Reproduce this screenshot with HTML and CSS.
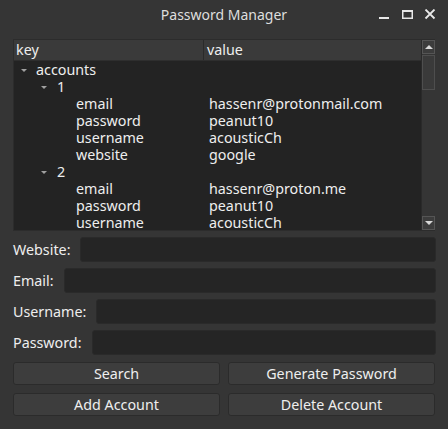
FILE: index.html
```html
<!DOCTYPE html>
<html>
<head>
<meta charset="utf-8">
<link rel="stylesheet" href="styles.css">
</head>
<body>
<div class="window">
  <div class="titlebar">
    <div class="title">Password Manager</div>
    <div class="controls">
      <svg class="ctl" width="12" height="12" viewBox="0 0 12 12"><rect x="1" y="8" width="10" height="2" fill="#e8e8e8"/></svg>
      <svg class="ctl" width="12" height="12" viewBox="0 0 12 12"><rect x="1.75" y="1.75" width="9.5" height="7.5" fill="none" stroke="#e8e8e8" stroke-width="1.5"/><rect x="1" y="1" width="11" height="2" fill="#e8e8e8"/></svg>
      <svg class="ctl" width="12" height="12" viewBox="0 0 12 12"><path d="M1.5 0.5 L10.5 9.5 M10.5 0.5 L1.5 9.5" stroke="#e8e8e8" stroke-width="1.8" fill="none"/></svg>
    </div>
  </div>
  <div class="content">
    <div class="tree">
      <div class="tree-main">
        <div class="header">
          <div class="hcell key">key</div>
          <div class="hcell val">value</div>
        </div>
        <div class="rows">
          <div class="row"><div class="kcell l0"><span class="arrow"></span><span class="t">accounts</span></div><div class="vcell"></div></div>
          <div class="row"><div class="kcell l1"><span class="arrow"></span><span class="t">1</span></div><div class="vcell"></div></div>
          <div class="row"><div class="kcell l2"><span class="t">email</span></div><div class="vcell"><span class="t">hassenr@protonmail.com</span></div></div>
          <div class="row"><div class="kcell l2"><span class="t">password</span></div><div class="vcell"><span class="t">peanut10</span></div></div>
          <div class="row"><div class="kcell l2"><span class="t">username</span></div><div class="vcell"><span class="t">acousticCh</span></div></div>
          <div class="row"><div class="kcell l2"><span class="t">website</span></div><div class="vcell"><span class="t">google</span></div></div>
          <div class="row"><div class="kcell l1"><span class="arrow"></span><span class="t">2</span></div><div class="vcell"></div></div>
          <div class="row"><div class="kcell l2"><span class="t">email</span></div><div class="vcell"><span class="t">hassenr@proton.me</span></div></div>
          <div class="row"><div class="kcell l2"><span class="t">password</span></div><div class="vcell"><span class="t">peanut10</span></div></div>
          <div class="row"><div class="kcell l2"><span class="t">username</span></div><div class="vcell"><span class="t">acousticCh</span></div></div>
        </div>
      </div>
      <div class="scrollbar">
        <div class="sbtn"><span class="up"></span></div>
        <div class="track"><div class="thumb"></div></div>
        <div class="sbtn"><span class="down"></span></div>
      </div>
    </div>
    <div class="form">
      <div class="frow"><label>Website:</label><div class="input"></div></div>
      <div class="frow"><label>Email:</label><div class="input"></div></div>
      <div class="frow"><label>Username:</label><div class="input"></div></div>
      <div class="frow"><label>Password:</label><div class="input"></div></div>
    </div>
    <div class="buttons">
      <button>Search</button>
      <button>Generate Password</button>
      <button>Add Account</button>
      <button>Delete Account</button>
    </div>
  </div>
</div>
</body>
</html>
```
FILE: styles.css
```css
html, body {
  margin: 0;
  padding: 0;
  background: #353535;
}
.window {
  width: 448px;
  height: 429px;
  background: #353535;
  color: #eeeeee;
  font-family: "Noto Sans", sans-serif;
  font-size: 14.3px;
  overflow: hidden;
}
.titlebar {
  height: 29px;
  position: relative;
  display: flex;
  align-items: center;
  justify-content: center;
}
.title {
  color: #dedede;
  font-size: 14px;
}
.controls {
  position: absolute;
  right: 12px;
  top: 9px;
  display: flex;
  gap: 11px;
}
.ctl { display: block; }
.content {
  padding: 10px 12px 0 13px;
}
.tree {
  height: 192px;
  display: flex;
  background: #232323;
  border: 1px solid #2c2c2c;
  border-right: none;
  width: 422px;
  box-sizing: border-box;
}
.tree-main {
  flex: 1;
  display: flex;
  flex-direction: column;
  min-width: 0;
}
.header {
  height: 20px;
  display: flex;
  background: #3a3a3a;
  border-bottom: 1px solid #2e2e2e;
  line-height: 20px;
}
.hcell { box-sizing: border-box; }
.hcell.key {
  width: 190px;
  padding-left: 2px;
  border-right: 1px solid #2a2a2a;
}
.hcell.val {
  flex: 1;
  padding-left: 3px;
}
.row {
  display: flex;
  height: 17px;
  line-height: 17px;
}
.t {
  display: inline-block;
  height: 17px;
  line-height: 17px;
  overflow: visible;
}
.kcell {
  width: 191px;
  box-sizing: border-box;
  display: flex;
  align-items: center;
  white-space: nowrap;
}
.kcell.l0 { padding-left: 7px; }
.kcell.l1 { padding-left: 27px; }
.kcell.l2 { padding-left: 62px; }
.arrow {
  width: 0;
  height: 0;
  border-left: 3px solid transparent;
  border-right: 3px solid transparent;
  border-top: 3px solid #a0a0a0;
  margin-right: 9px;
  margin-top: 1px;
}
.kcell.l1 .arrow { margin-right: 10px; }
.vcell {
  flex: 1;
  padding-left: 4px;
  white-space: nowrap;
}
.scrollbar {
  width: 14px;
  background: #353535;
  display: flex;
  flex-direction: column;
  border-left: 1px solid #2a2a2a;
  box-sizing: border-box;
}
.sbtn {
  height: 14px;
  box-sizing: border-box;
  border: 1px solid #555555;
  background: #3c3c3c;
  display: flex;
  align-items: center;
  justify-content: center;
}
.up {
  width: 0; height: 0;
  border-left: 4px solid transparent;
  border-right: 4px solid transparent;
  border-bottom: 4px solid #d8d8d8;
}
.down {
  width: 0; height: 0;
  border-left: 4px solid transparent;
  border-right: 4px solid transparent;
  border-top: 4px solid #d8d8d8;
}
.track {
  flex: 1;
  padding: 1px 0;
  display: flex;
  flex-direction: column;
}
.thumb {
  height: 35px;
  box-sizing: border-box;
  border: 1px solid #4e4e4e;
  background: #3a3a3a;
}
.form {
  display: flex;
  flex-direction: column;
  gap: 6px;
  margin-top: 6px;
}
.frow {
  display: flex;
  align-items: center;
  gap: 10px;
}
.frow label {
  white-space: nowrap;
}
.input {
  flex: 1;
  height: 25px;
  box-sizing: border-box;
  background: #252525;
  border: 1px solid #2a2a2a;
  border-radius: 3px;
}
.buttons {
  display: grid;
  grid-template-columns: 1fr 1fr;
  gap: 8px;
  margin-top: 7px;
  width: 422px;
}
button {
  height: 23px;
  box-sizing: border-box;
  background: #3d3d3d;
  color: #eeeeee;
  border: 1px solid #2b2b2b;
  border-radius: 3px;
  font-family: "Noto Sans", sans-serif;
  font-size: 14.3px;
  padding: 0;
  line-height: 20px;
}
```
